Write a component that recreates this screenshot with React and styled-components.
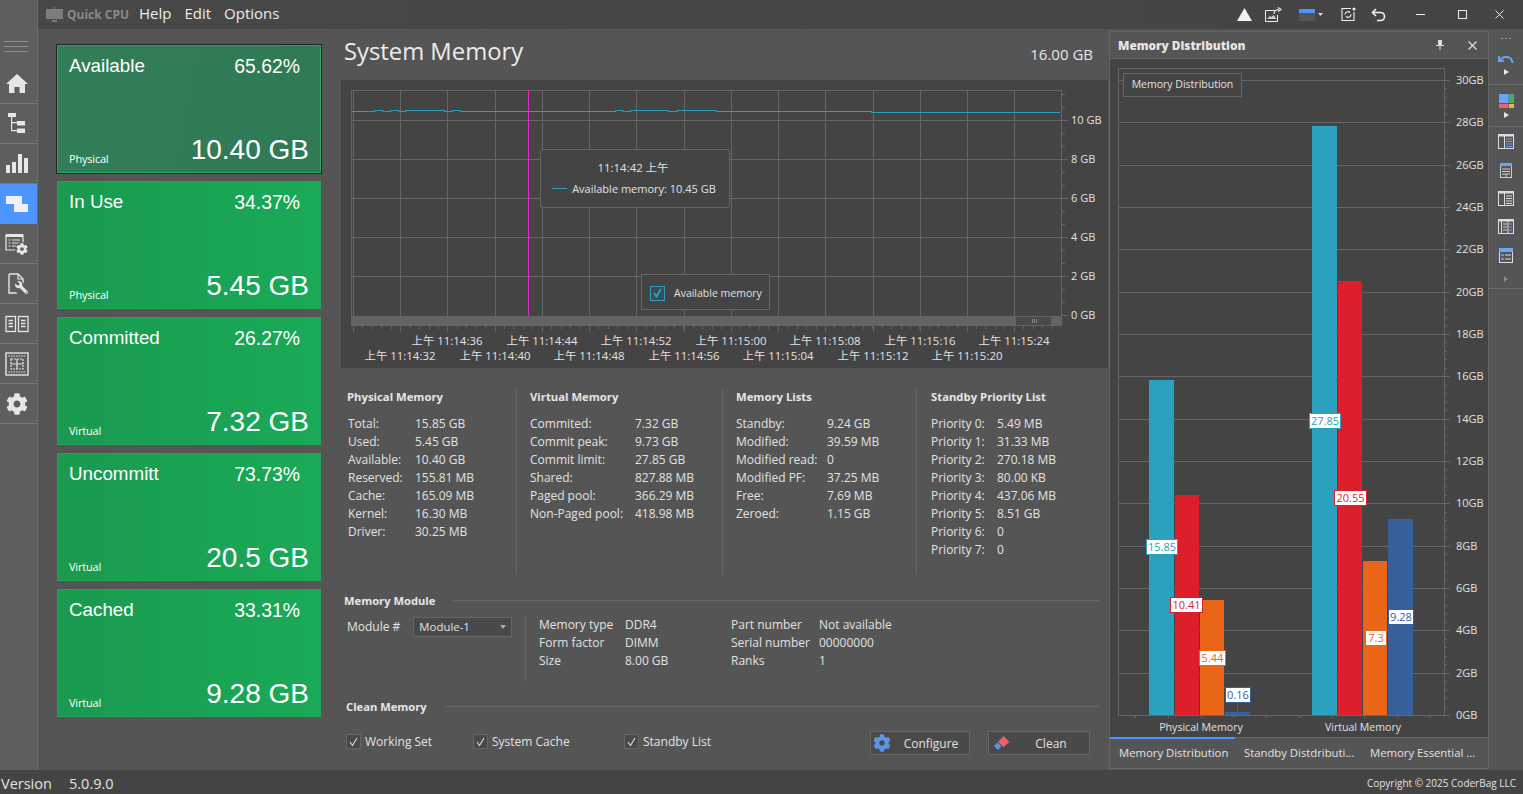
import React from 'react'
import styled, { createGlobalStyle } from 'styled-components'
import { FaCog, FaWrench } from 'react-icons/fa'

const UI_FONT = '"Open Sans", "Noto Sans CJK SC", sans-serif'
const ICON = '#e6e6e6'
const TEXT = '#e2e2e2'

const GlobalStyle = createGlobalStyle`
  html, body {
    margin: 0;
    padding: 0;
    overflow: hidden;
    background: #555;
  }
  * {
    box-sizing: border-box;
  }
`

const Frame = styled.div`
  width: 1523px;
  height: 794px;
  display: flex;
  flex-direction: column;
  font-family: ${UI_FONT};
  font-size: 12px;
  color: ${TEXT};
`
const Upper = styled.div`
  height: 770px;
  display: flex;
`
const Rail = styled.nav`
  width: 38px;
  background: #5f5d5d;
  border-right: 1px solid #6c6c6c;
  display: flex;
  flex-direction: column;
  padding-top: 40px;
`
const Burger = styled.div`
  height: 24px;
  padding: 1px 9px 0 4px;
  display: flex;
  flex-direction: column;
  gap: 4px;
  & > i {
    display: block;
    height: 1px;
    background: #8d8d8d;
  }
`
const RailItem = styled.div`
  height: 40px;
  flex: none;
  display: flex;
  align-items: center;
  justify-content: center;
  padding-right: 4px;
  border-bottom: 1px solid ${(p) => (p.$active ? '#4d96ff' : '#777')};
  background: ${(p) => (p.$active ? '#4d96ff' : 'transparent')};
`
const Content = styled.div`
  flex: 1;
  display: flex;
  flex-direction: column;
  min-width: 0;
`
const TitleBar = styled.header`
  height: 29px;
  flex: none;
  background: linear-gradient(90deg, #484848, #444);
  display: flex;
  align-items: center;
  padding-left: 8px;
`
const AppName = styled.div`
  display: flex;
  align-items: center;
  gap: 4px;
  width: 93px;
  font-weight: 700;
  font-size: 12px;
  color: #8a8a8a;
  white-space: nowrap;
`
const MenuItem = styled.span`
  font-size: 15px;
  color: #ececec;
  margin: -3px ${(p) => p.$gap}px 0 0;
`
const TitleTools = styled.div`
  margin-left: auto;
  display: flex;
  align-items: center;
`
const TitleTool = styled.div`
  width: ${(p) => p.$w}px;
  height: 29px;
  display: flex;
  align-items: center;
  justify-content: center;
`
const Body = styled.div`
  flex: 1;
  display: flex;
  min-height: 0;
`
const CardColumn = styled.div`
  width: 302px;
  flex: none;
  padding: 16px 19px 0;
  display: flex;
  flex-direction: column;
  gap: 8px;
`
const Card = styled.div`
  height: 128px;
  position: relative;
  padding: 8px 11px 0;
  display: flex;
  flex-direction: column;
  font-family: 'Liberation Sans', Arial, sans-serif;
  color: #fff;
  background: ${(p) =>
    p.$selected
      ? 'linear-gradient(100deg, #327e58, #2f7a55)'
      : 'linear-gradient(90deg, #199a50, #1aaa58)'};
  border: 1px solid ${(p) => (p.$selected ? '#2aa565' : '#22a45c')};
  outline: ${(p) => (p.$selected ? '1px solid #222' : 'none')};
`
const CardTop = styled.div`
  display: flex;
  justify-content: space-between;
  font-size: 18.8px;
  line-height: 24px;
  padding-right: 9px;
  & > span:last-child {
    font-size: 19.4px;
  }
`
const CardBottom = styled.div`
  margin-top: auto;
  padding-bottom: 5px;
  display: flex;
  justify-content: space-between;
  align-items: flex-end;
`
const CardKind = styled.span`
  font-family: ${UI_FONT};
  font-size: 11px;
  letter-spacing: -0.2px;
  line-height: 15px;
  margin-bottom: 1px;
`
const CardSize = styled.span`
  font-size: 28px;
  line-height: 34px;
`
const Main = styled.main`
  width: 768px;
  flex: none;
  display: flex;
  flex-direction: column;
`
const MainHead = styled.div`
  height: 51px;
  display: flex;
  justify-content: space-between;
  align-items: center;
  padding: 0 15px 8px 4px;
`
const MainTitle = styled.h1`
  margin: 0;
  font-size: 23.8px;
  font-weight: 400;
  color: #ececec;
`
const MainTotal = styled.span`
  font-size: 15px;
  color: #e6e6e6;
  margin-top: 6px;
`
const ChartPanel = styled.div`
  height: 288px;
  margin-left: 1px;
  background: #444;
  position: relative;
  & > svg {
    display: block;
  }
`
const HoverCard = styled.div`
  position: absolute;
  left: 199px;
  top: 69px;
  width: 190px;
  height: 59px;
  background: #444;
  border: 1px solid #666;
  border-radius: 3px;
  display: flex;
  flex-direction: column;
  align-items: center;
  padding-top: 8px;
  font-size: 11px;
  line-height: 20px;
`
const HoverTime = styled.span`
  font-size: 11.4px;
  margin-right: 4px;
`
const HoverRow = styled.div`
  display: flex;
  align-items: center;
  gap: 5px;
  height: 21px;
  margin-right: 2px;
`
const ChartLegend = styled.div`
  position: absolute;
  left: 300px;
  top: 194px;
  width: 129px;
  height: 36px;
  background: #444;
  border: 1px solid #666;
  display: flex;
  align-items: center;
  gap: 9px;
  padding: 2px 0 0 8px;
  font-size: 10.5px;
`
const LegendBox = styled.span`
  width: 15px;
  height: 15px;
  background: #3d4c52;
  border: 1px solid #2a9fbc;
  display: flex;
  align-items: center;
  justify-content: center;
`
const InfoGrid = styled.section`
  height: 223px;
  padding-top: 21px;
  display: flex;
`
const InfoColumn = styled.div`
  width: ${(p) => p.$w}px;
  flex: none;
  height: 185px;
  padding-left: ${(p) => p.$pad}px;
  border-right: ${(p) => (p.$last ? 'none' : '1px solid #666')};
`
const InfoHeading = styled.h3`
  margin: 0 0 11px ${(p) => p.$shift}px;
  font-size: 11.3px;
  line-height: 15px;
  font-weight: 700;
  color: #e6e6e6;
  white-space: nowrap;
`
const InfoRow = styled.div`
  display: flex;
  height: 18px;
  line-height: 18px;
  white-space: nowrap;
  & > span:first-child {
    width: ${(p) => p.$label}px;
    flex: none;
  }
`
const GroupHead = styled.div`
  display: flex;
  align-items: center;
  gap: ${(p) => p.$gap}px;
  padding: 0 8px 0 ${(p) => p.$left}px;
  height: 18px;
  font-size: 11.2px;
  font-weight: 700;
  color: #e6e6e6;
  white-space: nowrap;
  &::after {
    content: '';
    flex: 1;
    height: 1px;
    background: #666;
  }
`
const ModuleRow = styled.div`
  display: flex;
  height: 88px;
  padding: 7px 0 0 7px;
`
const ModulePicker = styled.div`
  width: 179px;
  flex: none;
  display: flex;
  gap: 13px;
  border-right: 1px solid #666;
  height: 66px;
`
const PickerLabel = styled.span`
  line-height: 20px;
  margin-top: 1px;
  white-space: nowrap;
`
const Select = styled.div`
  width: 99px;
  height: 20px;
  margin-top: 1px;
  background: #494949;
  border: 1px solid #666;
  padding: 0 5px;
  font-size: 11.4px;
  line-height: 18px;
  display: flex;
  justify-content: space-between;
  align-items: center;
  &::after {
    content: '';
    border-left: 3px solid transparent;
    border-right: 3px solid transparent;
    border-top: 4px solid #aaa;
  }
`
const ModuleFacts = styled.div`
  display: grid;
  grid-template-columns: 86px 106px 88px 1fr;
  grid-auto-rows: 18px;
  line-height: 18px;
  padding-left: 13px;
  white-space: nowrap;
`
const CleanRow = styled.div`
  display: flex;
  align-items: center;
  height: 24px;
  margin-top: 16px;
  padding-left: 6px;
`
const Check = styled.label`
  width: ${(p) => p.$w}px;
  flex: none;
  display: flex;
  align-items: center;
  gap: 4px;
  margin-top: -3px;
`
const CheckBox = styled.span`
  width: 15px;
  height: 15px;
  background: #494949;
  border: 1px solid #666;
  display: flex;
  align-items: center;
  justify-content: center;
`
const ActionButton = styled.button`
  width: ${(p) => p.$w}px;
  height: 24px;
  margin-left: ${(p) => p.$left}px;
  background: #494949;
  border: 1px solid #666;
  color: ${TEXT};
  font: inherit;
  padding: 0 0 0 ${(p) => p.$inset}px;
  display: flex;
  align-items: center;
  & > span {
    flex: 1;
    text-align: center;
    padding-left: ${(p) => p.$pad}px;
  }
`
const Dock = styled.aside`
  width: 380px;
  margin: 2px 0 1px 1px;
  flex: none;
  border: 1px solid #666;
  display: flex;
  flex-direction: column;
  background: #444;
`
const DockHead = styled.div`
  height: 27px;
  flex: none;
  background: #555;
  border-bottom: 1px solid #666;
  display: flex;
  align-items: center;
  padding: 0 11px 0 8px;
  font-weight: 700;
  color: #e6e6e6;
  gap: 24px;
  & > b {
    flex: 1;
    font-size: 11.8px;
  }
`
const DockChart = styled.div`
  flex: 1;
  position: relative;
  & > svg {
    display: block;
  }
`
const BarLegend = styled.div`
  position: absolute;
  left: 13px;
  top: 14px;
  width: 119px;
  height: 24px;
  border: 1px solid #666;
  background: #444;
  font-size: 10.5px;
  line-height: 21px;
  text-align: center;
`
const DockTabs = styled.div`
  height: 31px;
  flex: none;
  background: #555;
  border-top: 1px solid #666;
  display: flex;
  position: relative;
`
const DockTab = styled.div`
  width: ${(p) => p.$w}px;
  flex: none;
  padding-left: 9px;
  font-size: 11.3px;
  line-height: 29px;
  white-space: nowrap;
  position: relative;
  &::before {
    content: '';
    display: ${(p) => (p.$active ? 'block' : 'none')};
    position: absolute;
    left: 0;
    right: 0;
    top: -1px;
    height: 2px;
    background: #4d96ff;
  }
`
const ToolRail = styled.div`
  flex: 1;
  display: flex;
  flex-direction: column;
  align-items: center;
  padding-top: 3px;
`
const ToolSlot = styled.div`
  width: 100%;
  height: ${(p) => p.$h}px;
  flex: none;
  display: flex;
  flex-direction: column;
  align-items: center;
  justify-content: center;
  gap: 4px;
  border-bottom: ${(p) => (p.$line ? '1px solid #6a6a6a' : 'none')};
`
const StatusBar = styled.footer`
  height: 24px;
  background: #444;
  display: flex;
  align-items: center;
  padding: 2px 7px 0 1px;
  font-size: 14.5px;
  & > span:nth-child(1) {
    width: 68px;
  }
  & > small {
    margin-left: auto;
    font-size: 10px;
  }
`

const Tri = () => (
  <svg width="5" height="6" viewBox="0 0 5 6">
    <path d="M0 0l5 3-5 3z" fill={ICON} />
  </svg>
)

const RAIL_BG = '#5f5d5d'

const railIcons = [
  <svg key="home" width="22" height="19" viewBox="0 0 22 19" fill={ICON}>
    <path d="M11 0L0 10h3v9h5.5v-6h5v6H19v-9h3z" />
  </svg>,
  <svg key="tree" width="20" height="22" viewBox="0 0 20 22" fill={ICON}>
    <rect x="1" y="0" width="8" height="4" />
    <path d="M4 4h1.2v13H10v1.2H4zM5 9h5v1.2H5z" />
    <rect x="10" y="8" width="8" height="4.5" />
    <rect x="10" y="15.5" width="8" height="4.5" />
  </svg>,
  <svg key="bars" width="24" height="21" viewBox="0 0 24 21" fill={ICON}>
    <rect x="1" y="12" width="4" height="8" />
    <rect x="7" y="9" width="4" height="11" />
    <rect x="13" y="1" width="4" height="19" />
    <rect x="19" y="5" width="4" height="15" />
  </svg>,
  <svg key="win" width="22" height="16" viewBox="0 0 22 16" fill="#eef2f8">
    <rect x="0" y="0" width="16" height="8" />
    <rect x="8" y="8" width="14" height="8" />
  </svg>,
  <svg key="tg" width="24" height="24" viewBox="0 0 24 24" fill="none">
    <path d="M1 3h17v15H1z" stroke={ICON} strokeWidth="1.2" />
    <rect x="1" y="2" width="17" height="3" fill={ICON} />
    <path d="M3.5 8h2M7 8h8M3.5 11h2M7 11h8M3.5 14h2M7 14h8" stroke={ICON} strokeWidth="1.2" />
    <circle cx="17" cy="17" r="7" fill={RAIL_BG} />
    <FaCog x="11" y="11" size="12" color={ICON} />
  </svg>,
  <svg key="doc" width="22" height="24" viewBox="0 0 22 24" fill="none">
    <path d="M3 2h9l5 5v8M3 2v19h8" stroke={ICON} strokeWidth="1.4" />
    <path d="M12 2v5h5" stroke={ICON} strokeWidth="1.2" />
    <circle cx="13" cy="15" r="6" fill={RAIL_BG} />
    <g transform="translate(30 0) scale(-1 1)">
      <FaWrench x="8" y="9" size="13" color={ICON} />
    </g>
  </svg>,
  <svg key="cols" width="24" height="18" viewBox="0 0 24 18" fill="none" stroke={ICON} strokeWidth="1.3">
    <rect x="1" y="1.5" width="9.5" height="15" />
    <rect x="13.5" y="1.5" width="9.5" height="15" />
    <path d="M3.5 5.5h4.5M3.5 8.5h4.5M3.5 11.5h4.5M16 5.5h4.5M16 8.5h4.5M16 11.5h4.5" />
  </svg>,
  <svg key="grid" width="24" height="24" viewBox="0 0 24 24" fill="none" stroke={ICON}>
    <rect x="1" y="1" width="22" height="22" strokeWidth="1.4" />
    <path d="M3.5 4h17M3.5 20h17" strokeWidth="1.2" strokeDasharray="1.5 1" />
    <rect x="6" y="7" width="12" height="10" strokeWidth="1.2" strokeDasharray="2 1" />
    <path d="M6 12h12M12 7v10" strokeWidth="1.2" />
  </svg>,
  <FaCog key="cog" size={22} color={ICON} />,
]

const cards = [
  { name: 'Available', pct: '65.62%', kind: 'Physical', size: '10.40 GB', selected: true },
  { name: 'In Use', pct: '34.37%', kind: 'Physical', size: '5.45 GB' },
  { name: 'Committed', pct: '26.27%', kind: 'Virtual', size: '7.32 GB' },
  { name: 'Uncommitt', pct: '73.73%', kind: 'Virtual', size: '20.5 GB' },
  { name: 'Cached', pct: '33.31%', kind: 'Virtual', size: '9.28 GB' },
]

const infoColumns = [
  {
    title: 'Physical Memory', w: 177, pad: 8, shift: -1, label: 67,
    rows: [['Total:', '15.85 GB'], ['Used:', '5.45 GB'], ['Available:', '10.40 GB'], ['Reserved:', '155.81 MB'], ['Cache:', '165.09 MB'], ['Kernel:', '16.30 MB'], ['Driver:', '30.25 MB']],
  },
  {
    title: 'Virtual Memory', w: 206, pad: 13, shift: 0, label: 105,
    rows: [['Commited:', '7.32 GB'], ['Commit peak:', '9.73 GB'], ['Commit limit:', '27.85 GB'], ['Shared:', '827.88 MB'], ['Paged pool:', '366.29 MB'], ['Non-Paged pool:', '418.98 MB']],
  },
  {
    title: 'Memory Lists', w: 194, pad: 13, shift: 0, label: 91,
    rows: [['Standby:', '9.24 GB'], ['Modified:', '39.59 MB'], ['Modified read:', '0'], ['Modified PF:', '37.25 MB'], ['Free:', '7.69 MB'], ['Zeroed:', '1.15 GB']],
  },
  {
    title: 'Standby Priority List', w: 180, pad: 14, shift: 0, label: 66, last: true,
    rows: [['Priority 0:', '5.49 MB'], ['Priority 1:', '31.33 MB'], ['Priority 2:', '270.18 MB'], ['Priority 3:', '80.00 KB'], ['Priority 4:', '437.06 MB'], ['Priority 5:', '8.51 GB'], ['Priority 6:', '0'], ['Priority 7:', '0']],
  },
]

const moduleFacts = [
  'Memory type', 'DDR4', 'Part number', 'Not available',
  'Form factor', 'DIMM', 'Serial number', '00000000',
  'Size', '8.00 GB', 'Ranks', '1',
]

const lineX = [353, 400, 447, 495, 542, 589, 636, 684, 731, 778, 825, 873, 920, 967, 1014]
const lineY = [120, 159, 198, 237, 276]
const axisLabels = ['10 GB', '8 GB', '6 GB', '4 GB', '2 GB', '0 GB']
const upperTimes = [[447, '11:14:36'], [542, '11:14:44'], [636, '11:14:52'], [731, '11:15:00'], [825, '11:15:08'], [920, '11:15:16'], [1014, '11:15:24']]
const lowerTimes = [[400, '11:14:32'], [495, '11:14:40'], [589, '11:14:48'], [684, '11:14:56'], [778, '11:15:04'], [873, '11:15:12'], [967, '11:15:20']]

function MemoryChart() {
  const minorX = []
  for (let x = 353; x < 1061; x += 9.44) minorX.push(x)
  const minorY = []
  for (let y = 315; y > 92; y -= 13) minorY.push(y)
  return (
    <svg width="767" height="288" viewBox="341 80 767 288" fontFamily={UI_FONT} fontSize="11.4" fill={TEXT}>
      <g stroke="#666" fill="none" shapeRendering="crispEdges">
        <rect x="351.5" y="90.5" width="710" height="226" />
        {lineX.map((x) => <path key={x} d={`M${x + 0.5} 90V316`} />)}
        {lineY.map((y) => <path key={y} d={`M352 ${y + 0.5}H1068`} />)}
        {minorY.map((y) => <path key={y} d={`M1061 ${y + 0.5}h4`} />)}
        {minorX.map((x) => <path key={x} d={`M${Math.round(x) + 0.5} 326v3`} />)}
        {lineX.map((x) => <path key={x} d={`M${x + 0.5} 326v6`} />)}
        <path d="M1061 315.5h7" />
      </g>
      <rect x="351" y="316" width="711" height="10" fill="#636363" />
      <rect x="1016" y="317" width="35" height="8" fill="#4a4a4a" />
      <path d="M1032.5 319v4M1034.5 319v4M1036.5 319v4" stroke="#888" />
      <path
        d="M352 111.5H374V110.5H382V111.5H390V110.5H398V111.5H405V110.5H444V111.5H452V110.5H460V111.5H615V110.5H622V111.5H630V110.5H668V111.5H677V110.5H716V111.5H871V112.5H1060"
        stroke="#2a9fbc"
        fill="none"
        shapeRendering="crispEdges"
      />
      <path d="M528.5 90V316" stroke="#e42bd0" shapeRendering="crispEdges" />
      <g fontSize="11">
        {axisLabels.map((label, i) => (
          <text key={label} x="1071" y={124 + i * 39}>{label}</text>
        ))}
      </g>
      {upperTimes.map(([x, t]) => (
        <text key={t} x={x} y="345" textAnchor="middle">上午 {t}</text>
      ))}
      {lowerTimes.map(([x, t]) => (
        <text key={t} x={x} y="360" textAnchor="middle">上午 {t}</text>
      ))}
    </svg>
  )
}

const gbY = (gb) => 715 - gb * 21.17
const bars = [
  { x: 1149, w: 25, top: 380, c: '#2ba0bf' },
  { x: 1175, w: 24, top: 495, c: '#dc1f2a' },
  { x: 1200, w: 24, top: 600, c: '#ea6518' },
  { x: 1225, w: 25, top: 712, c: '#36609b' },
  { x: 1312, w: 25, top: 126, c: '#2ba0bf' },
  { x: 1338, w: 24, top: 281, c: '#dc1f2a' },
  { x: 1363, w: 24, top: 561, c: '#ea6518' },
  { x: 1388, w: 25, top: 519, c: '#36609b' },
]
const barTags = [
  { x: 1146, y: 539, w: 31, t: '15.85', c: '#2ba0bf' },
  { x: 1170, y: 597, w: 32, t: '10.41', c: '#dc1f2a' },
  { x: 1199, y: 650, w: 26, t: '5.44', c: '#ea6518' },
  { x: 1225, y: 687, w: 25, t: '0.16', c: '#36609b' },
  { x: 1309, y: 413, w: 31, t: '27.85', c: '#2ba0bf' },
  { x: 1334, y: 490, w: 32, t: '20.55', c: '#dc1f2a' },
  { x: 1365, y: 630, w: 21, t: '7.3', c: '#ea6518' },
  { x: 1388, y: 609, w: 25, t: '9.28', c: '#36609b' },
]

function DistributionChart() {
  const gb = []
  for (let v = 0; v <= 30; v += 2) gb.push(v)
  const minor = []
  for (let v = 0; v < 30; v += 0.4) minor.push(v)
  return (
    <svg width="378" height="678" viewBox="1110 59 378 678" fontFamily={UI_FONT} fontSize="11" fill={TEXT}>
      <g stroke="#666" fill="none" shapeRendering="crispEdges">
        <path d="M1118.5 68V715.5H1444.5V68H1118.5" />
        {gb.map((v) => <path key={v} d={`M1118 ${Math.round(gbY(v)) + 0.5}H1450`} />)}
        {minor.map((v) => <path key={v} d={`M1445 ${Math.round(gbY(v)) + 0.5}h2`} />)}
        {[1135, 1168, 1201, 1233, 1266, 1299, 1331, 1364, 1397, 1429].map((x) => (
          <path key={x} d={`M${x + 0.5} 715v3`} />
        ))}
      </g>
      {bars.map((b) => (
        <rect key={b.x} x={b.x} y={b.top} width={b.w} height={715 - b.top} fill={b.c} />
      ))}
      <path d="M1237.5 702V712" stroke="#36609b" />
      {barTags.map((b) => (
        <g key={b.t}>
          <rect x={b.x + 0.5} y={b.y + 0.5} width={b.w} height={15} fill="#fff" stroke={b.c} />
          <text x={b.x + b.w / 2 + 0.5} y={b.y + 12} textAnchor="middle" fill={b.c} fontSize="11">{b.t}</text>
        </g>
      ))}
      {gb.map((v) => (
        <text key={v} x="1456" y={gbY(v) + 4}>{v}GB</text>
      ))}
      <g fontSize="10.6">
        <text x="1201" y="731" textAnchor="middle">Physical Memory</text>
        <text x="1363" y="731" textAnchor="middle">Virtual Memory</text>
      </g>
    </svg>
  )
}

const Tick = ({ color = '#ddd', width = 1.1 }) => (
  <svg width="11" height="10" viewBox="0 0 11 10">
    <path d="M2 5l2.5 3.5L9 1" fill="none" stroke={color} strokeWidth={width} />
  </svg>
)

export default function App() {
  return (
    <Frame>
      <GlobalStyle />
      <Upper>
        <Rail>
          <Burger><i /><i /><i /></Burger>
          {railIcons.map((icon, i) => (
            <RailItem key={i} $active={i === 3}>{icon}</RailItem>
          ))}
        </Rail>
        <Content>
          <TitleBar>
            <AppName>
              <svg width="17" height="16" viewBox="0 0 17 16">
                <rect x="0" y="2" width="17" height="10" fill="#7d7d7d" />
                <path d="M8 0h1v2H8zM6 13h5v2H6z" fill="#7d7d7d" />
              </svg>
              Quick CPU
            </AppName>
            <MenuItem $gap={13}>Help</MenuItem>
            <MenuItem $gap={13}>Edit</MenuItem>
            <MenuItem $gap={0}>Options</MenuItem>
            <TitleTools>
              <TitleTool $w={24}>
                <svg width="15" height="13" viewBox="0 0 15 13"><path d="M7.5 0L15 13H0z" fill="#f2f2f2" /></svg>
              </TitleTool>
              <TitleTool $w={34}>
                <svg width="17" height="15" viewBox="0 0 17 15" fill="none" stroke="#eee">
                  <path d="M10 3.5H.5v11h12V8" />
                  <path d="M2 12l3-3 1.5 1 2-2 3 4z" fill="#ccc" stroke="none" />
                  <path d="M9 7c0-3 2-4.5 5-4.5M13 .5l3 2-3 2" strokeWidth="1.2" />
                </svg>
              </TitleTool>
              <TitleTool $w={42}>
                <svg width="24" height="12" viewBox="0 0 24 12">
                  <rect width="16" height="4" fill="#4d96ff" />
                  <rect y="4" width="16" height="8" fill="#555" />
                  <path d="M19 4h5l-2.5 3z" fill="#ddd" />
                </svg>
              </TitleTool>
              <TitleTool $w={32}>
                <svg width="15" height="15" viewBox="0 0 15 15" fill="none" stroke="#eee">
                  <path d="M10 1.5H1v12h12V5" strokeWidth="1.1" />
                  <path d="M4 7.5a3 3 0 0 1 5-2M10 7.5a3 3 0 0 1-5 2" strokeWidth="1.2" />
                  <circle cx="13" cy="2" r="1.6" fill="#eee" stroke="none" />
                </svg>
              </TitleTool>
              <TitleTool $w={28}>
                <svg width="15" height="14" viewBox="0 0 15 14" fill="none" stroke="#f2f2f2" strokeWidth="1.6">
                  <path d="M5 1L1.5 4.5 5 8M2 4.5h7.5a4 4 0 0 1 0 8H6" />
                </svg>
              </TitleTool>
              <TitleTool $w={57}>
                <svg width="9" height="9" viewBox="0 0 9 9"><path d="M0 4.5h9" stroke="#eee" /></svg>
              </TitleTool>
              <TitleTool $w={27}>
                <svg width="9" height="9" viewBox="0 0 9 9"><rect x=".5" y=".5" width="8" height="8" fill="none" stroke="#eee" /></svg>
              </TitleTool>
              <TitleTool $w={47}>
                <svg width="9" height="9" viewBox="0 0 9 9"><path d="M.5.5l8 8M8.5.5l-8 8" stroke="#eee" /></svg>
              </TitleTool>
            </TitleTools>
          </TitleBar>
          <Body>
            <CardColumn>
              {cards.map((c) => (
                <Card key={c.name} $selected={c.selected}>
                  <CardTop><span>{c.name}</span><span>{c.pct}</span></CardTop>
                  <CardBottom>
                    <CardKind>{c.kind}</CardKind>
                    <CardSize>{c.size}</CardSize>
                  </CardBottom>
                </Card>
              ))}
            </CardColumn>
            <Main>
              <MainHead>
                <MainTitle>System Memory</MainTitle>
                <MainTotal>16.00 GB</MainTotal>
              </MainHead>
              <ChartPanel>
                <MemoryChart />
                <HoverCard>
                  <HoverTime>11:14:42 上午</HoverTime>
                  <HoverRow>
                    <svg width="15" height="3" viewBox="0 0 15 3">
                      <path d="M0 1.5h15" stroke="#2a9fbc" shapeRendering="crispEdges" />
                    </svg>
                    Available memory: 10.45 GB
                  </HoverRow>
                </HoverCard>
                <ChartLegend>
                  <LegendBox><Tick color="#2a9fbc" width={2} /></LegendBox>
                  Available memory
                </ChartLegend>
              </ChartPanel>
              <InfoGrid>
                {infoColumns.map((col) => (
                  <InfoColumn key={col.title} $w={col.w} $pad={col.pad} $last={col.last}>
                    <InfoHeading $shift={col.shift}>{col.title}</InfoHeading>
                    {col.rows.map(([k, v]) => (
                      <InfoRow key={k} $label={col.label}><span>{k}</span><span>{v}</span></InfoRow>
                    ))}
                  </InfoColumn>
                ))}
              </InfoGrid>
              <GroupHead $gap={18} $left={4}>Memory Module</GroupHead>
              <ModuleRow>
                <ModulePicker>
                  <PickerLabel>Module #</PickerLabel>
                  <Select>Module-1</Select>
                </ModulePicker>
                <ModuleFacts>
                  {moduleFacts.map((f) => <span key={f}>{f}</span>)}
                </ModuleFacts>
              </ModuleRow>
              <GroupHead $gap={18} $left={6}>Clean Memory</GroupHead>
              <CleanRow>
                <Check $w={127}><CheckBox><Tick /></CheckBox>Working Set</Check>
                <Check $w={151}><CheckBox><Tick /></CheckBox>System Cache</Check>
                <Check $w={246}><CheckBox><Tick /></CheckBox>Standby List</Check>
                <ActionButton $w={100} $left={0} $pad={2} $inset={2}>
                  <FaCog size={18} color="#5b95e8" />
                  <span>Configure</span>
                </ActionButton>
                <ActionButton $w={102} $left={18} $pad={2} $inset={4}>
                  <svg width="18" height="18" viewBox="0 0 18 18">
                    <path d="M1 12l3.5-3.5 4 4L5 16z" fill="#5b95e8" />
                    <path d="M5 8l5.5-6 6 6-6 5z" fill="#f0606e" />
                  </svg>
                  <span>Clean</span>
                </ActionButton>
              </CleanRow>
            </Main>
            <Dock>
              <DockHead>
                <b>Memory Distribution</b>
                <svg width="8" height="10" viewBox="0 0 8 10" fill="#ddd">
                  <path d="M2 0h4v5h2v1H4.5v4h-1V6H0V5h2z" />
                </svg>
                <svg width="9" height="9" viewBox="0 0 9 9"><path d="M.5.5l8 8M8.5.5l-8 8" stroke="#ddd" strokeWidth="1.2" /></svg>
              </DockHead>
              <DockChart>
                <DistributionChart />
                <BarLegend>Memory Distribution</BarLegend>
              </DockChart>
              <DockTabs>
                <DockTab $w={125} $active>Memory Distribution</DockTab>
                <DockTab $w={126}>Standby Distdributi...</DockTab>
                <DockTab $w={127}>Memory Essential ...</DockTab>
              </DockTabs>
            </Dock>
            <ToolRail>
              <ToolSlot $h={12}>
                <svg width="11" height="3" viewBox="0 0 11 3" fill="#999"><path d="M0 1h2v1H0zM4 1h2v1H4zM8 1h2v1H8z" /></svg>
              </ToolSlot>
              <ToolSlot $h={41} $line>
                <svg width="16" height="11" viewBox="0 0 16 11" fill="none" stroke="#6aa5f5" strokeWidth="2"><path d="M1 2v5h5M2 7a6.5 6.5 0 0 1 12.5 2" /></svg>
                <Tri />
              </ToolSlot>
              <ToolSlot $h={42} $line>
                <svg width="15" height="14" viewBox="0 0 15 14">
                  <rect width="9.5" height="9" fill="#6aa5f5" />
                  <rect x="10" width="5" height="9" fill="#3fae6a" />
                  <rect y="10" width="9.5" height="4" fill="#f0606e" />
                  <rect x="10" y="10" width="5" height="4" fill="#f2b632" />
                </svg>
                <Tri />
              </ToolSlot>
              <ToolSlot $h={29}>
                <svg width="16" height="15" viewBox="0 0 16 15" fill="none" stroke="#ddd">
                  <rect x=".5" y=".5" width="15" height="14" />
                  <path d="M0 1.5h16" strokeWidth="2" />
                  <path d="M6.5 1v14" />
                  <path d="M8 5h6M8 7.5h6M8 10h6M8 12.5h6" stroke="#6aa5f5" />
                </svg>
              </ToolSlot>
              <ToolSlot $h={28}>
                <svg width="12" height="15" viewBox="0 0 12 15" fill="none" stroke="#ccc">
                  <rect x=".5" y=".5" width="11" height="14" />
                  <rect width="12" height="3" fill="#6aa5f5" stroke="none" />
                  <path d="M2 6h8M2 8.5h8M2 11h8M6 11v3" />
                </svg>
              </ToolSlot>
              <ToolSlot $h={28}>
                <svg width="16" height="15" viewBox="0 0 16 15" fill="none" stroke="#ddd">
                  <rect x=".5" y=".5" width="15" height="14" />
                  <path d="M0 1.5h16" strokeWidth="2" />
                  <path d="M6.5 1v14M8 5h6M8 7.5h6M8 10h6M8 12.5h6" />
                </svg>
              </ToolSlot>
              <ToolSlot $h={28}>
                <svg width="16" height="15" viewBox="0 0 16 15" fill="none" stroke="#ddd">
                  <rect x=".5" y=".5" width="15" height="14" />
                  <path d="M0 1.5h16" strokeWidth="2" />
                  <path d="M3.5 1v14M10 1v14M5 5h4M5 8h4M5 11h4" />
                  <path d="M11 5h3M11 8h3M11 11h3" stroke="#6aa5f5" />
                </svg>
              </ToolSlot>
              <ToolSlot $h={30}>
                <svg width="14" height="15" viewBox="0 0 14 15" fill="none" stroke="#ddd">
                  <rect x=".5" y=".5" width="13" height="14" />
                  <rect width="14" height="4" fill="#6aa5f5" stroke="none" />
                  <circle cx="3.5" cy="7" r="1.3" fill="#6aa5f5" stroke="none" />
                  <circle cx="3.5" cy="11" r="1.3" fill="#6aa5f5" stroke="none" />
                  <path d="M6 7h6M6 11h6" />
                </svg>
              </ToolSlot>
              <ToolSlot $h={19} $line>
                <svg width="4" height="6" viewBox="0 0 4 6"><path d="M0 0l4 3-4 3z" fill="#8a8a8a" /></svg>
              </ToolSlot>
            </ToolRail>
          </Body>
        </Content>
      </Upper>
      <StatusBar>
        <span>Version</span>
        <span>5.0.9.0</span>
        <small>Copyright © 2025 CoderBag LLC</small>
      </StatusBar>
    </Frame>
  )
}
